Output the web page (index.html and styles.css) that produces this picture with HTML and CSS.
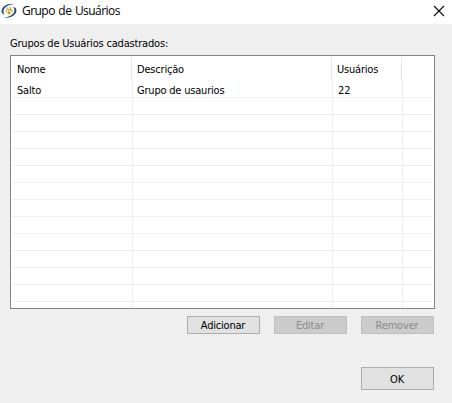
FILE: index.html
```html
<!DOCTYPE html>
<html lang="pt-BR">
<head>
<meta charset="utf-8">
<title>Grupo de Usuários</title>
<link rel="stylesheet" href="styles.css">
</head>
<body>
<div class="window">
  <header class="titlebar">
    <svg class="app-icon" width="16" height="16" viewBox="0 0 16 16">
      <circle cx="8" cy="7.800" r="3.600" fill="#f6ecc4"/>
      <path d="M3.600 11.700C1 11.300.1 9.300.7 7 1.700 3.200 6.500.2 13 .9 8 1.500 3.700 3.600 2.700 7c-.5 1.800-.1 3.400.9 4.700z" fill="#1f4f86"/>
      <path d="M12.200 3.900c2.600.4 3.700 2.300 3.100 4.600-1 3.900-5.800 6.900-12.300 6.200 5-.6 9.300-2.600 10.300-6.100.5-1.800-.1-3.400-1.100-4.700z" fill="#1f4480"/>
      <path d="M5 4.800l1.500-.8.600 1.300-1.400.9zM8.600 3.900l2 .7-.8 1.300-1.400-.5zM4.300 7.500l1.700.2v1.600l-1.600-.2zM7.200 6.900h1.700v1.700H7.200zM10 7l1.700.2-.3 1.800-1.500-.2zM6.300 10.300l3.300-.2-.8 1.500-1.800.1z" fill="#deb644"/>
      <path d="M6.600 6h1v1h-1zM9 6h1v1H9zM6.900 9h2.300v.8H6.900z" fill="#5c5b3c"/>
    </svg>
    <h1 class="title">Grupo de Usuários</h1>
    <svg class="close" width="12" height="12" viewBox="0 0 12 12"><path d="M1 1l10 10M11 1L1 11" stroke="#111" stroke-width="1.200"/></svg>
  </header>
  <main class="content">
    <p class="label">Grupos de Usuários cadastrados:</p>
    <div class="list">
      <div class="head"><span>Nome</span><span>Descrição</span><span>Usuários</span><span></span></div>
      <div class="row"><span>Salto</span><span>Grupo de usaurios</span><span class="count">22</span><span></span></div>
      <div class="row"><span></span><span></span><span></span><span></span></div>
      <div class="row"><span></span><span></span><span></span><span></span></div>
      <div class="row"><span></span><span></span><span></span><span></span></div>
      <div class="row"><span></span><span></span><span></span><span></span></div>
      <div class="row"><span></span><span></span><span></span><span></span></div>
      <div class="row"><span></span><span></span><span></span><span></span></div>
      <div class="row"><span></span><span></span><span></span><span></span></div>
      <div class="row"><span></span><span></span><span></span><span></span></div>
      <div class="row"><span></span><span></span><span></span><span></span></div>
      <div class="row"><span></span><span></span><span></span><span></span></div>
      <div class="row"><span></span><span></span><span></span><span></span></div>
      <div class="row"><span></span><span></span><span></span><span></span></div>
      <div class="row"><span></span><span></span><span></span><span></span></div>
    </div>
    <div class="actions">
      <button class="btn">Adicionar</button>
      <button class="btn" disabled>Editar</button>
      <button class="btn" disabled>Remover</button>
    </div>
    <div class="footer"><button class="btn ok">OK</button></div>
  </main>
</div>
</body>
</html>
```
FILE: styles.css
```css
* { box-sizing: border-box; }
body { margin: 0; background: #efefef; color: #000; font: 11px/17px "DejaVu Sans Condensed", "DejaVu Sans", sans-serif; font-stretch: condensed; letter-spacing: -.2px; }
.window { width: 452px; height: 403px; overflow: hidden; }
.titlebar { display: flex; align-items: center; height: 24px; padding: 0 7px 2px 1px; background: #fff; }
.app-icon { margin-top: -1px; }
.title { flex: 1; margin: 0 0 0 5px; font: 400 12px/20px "Open Sans", sans-serif; letter-spacing: -.55px; word-spacing: 1px; }
.content { padding: 11px 17px 0 10px; }
.label { margin: 0 0 3px; height: 17px; letter-spacing: -.19px; }
.list { display: flex; flex-direction: column; width: 425px; height: 254px; padding: 1px; border: 1px solid #828287; background: #fff; overflow: hidden; }
.head, .row { display: grid; flex: none; white-space: nowrap; }
.head { grid-template-columns: 120px 200px 70px 1fr; height: 24px; line-height: 26px; }
.row { grid-template-columns: 121px 200px 70px 1fr; height: 17px; line-height: 19px; border-bottom: 1px solid #efefef; }
.head span, .row span { padding-left: 5px; border-right: 1px solid #e5e5e5; }
.row span { height: 16px; border-color: #efefef; padding-left: 4px; }
.head span { height: 24px; }
.row .count { padding-left: 5px; letter-spacing: -.1px; }
.head span:first-child, .row span:first-child { padding-left: 5px; }
.head span:last-child, .row span:last-child { border-right: 0; }
.actions { display: flex; justify-content: flex-end; gap: 14px; margin-top: 7px; padding-right: 1px; }
.btn { width: 73px; height: 18px; padding: 0 1px 0 0; border: 1px solid #adadad; background: #e1e1e1; color: #000; font: inherit; line-height: 15px; letter-spacing: inherit; }
.btn:disabled { border-color: #bfbfbf; background: #ccc; color: #8b8b8b; }
.footer { display: flex; justify-content: flex-end; margin-top: 33px; padding-right: 1px; }
.ok { height: 23px; padding-top: 2px; line-height: 19px; }
```
